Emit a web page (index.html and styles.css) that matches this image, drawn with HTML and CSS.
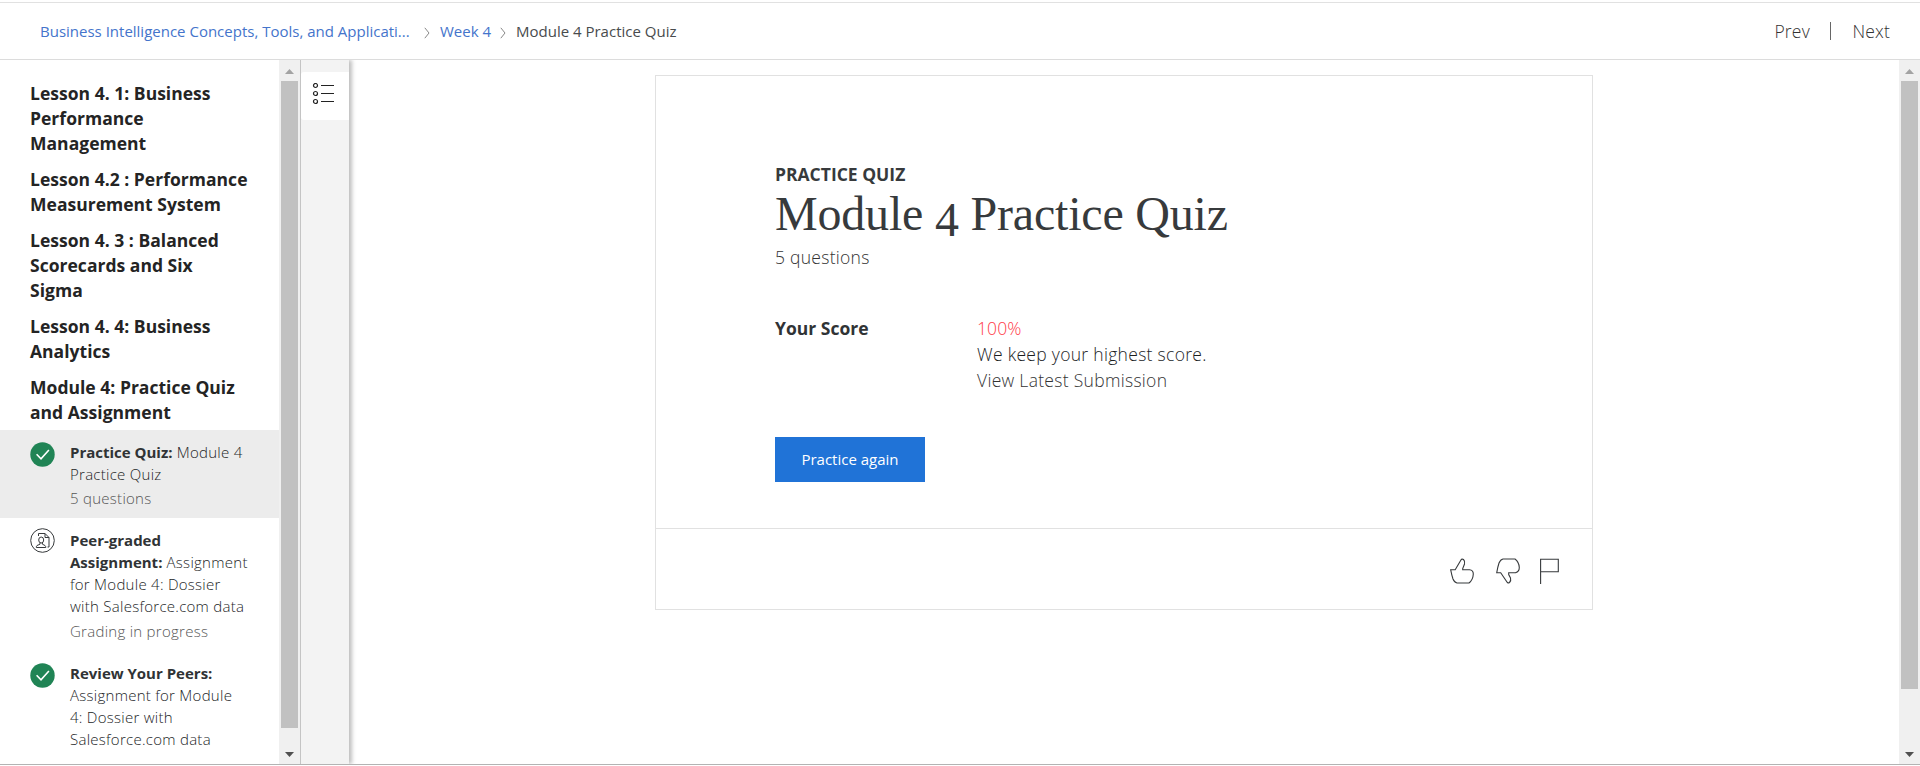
FILE: index.html
```html
<!DOCTYPE html>
<html lang="en">
<head>
<meta charset="utf-8">
<title>Module 4 Practice Quiz</title>
<link rel="stylesheet" href="styles.css">
</head>
<body>
<header class="topbar">
  <nav class="crumbs">
    <a class="crumb course">Business Intelligence Concepts, Tools, and Applicati...</a>
    <svg class="chev" width="6" height="12" viewBox="0 0 6 12"><path d="M.8.8 5 6 .8 11.2" fill="none" stroke="#888" stroke-width="1"/></svg>
    <a class="crumb week">Week 4</a>
    <svg class="chev" width="6" height="12" viewBox="0 0 6 12"><path d="M.8.8 5 6 .8 11.2" fill="none" stroke="#888" stroke-width="1"/></svg>
    <span class="crumb current">Module 4 Practice Quiz</span>
  </nav>
  <nav class="pager"><a class="prev">Prev</a><i class="bar"></i><a class="next">Next</a></nav>
</header>
<div class="body">
  <aside class="sidebar">
    <div class="lessons">
      <h3>Lesson 4. 1: Business<br>Performance<br>Management</h3>
      <h3>Lesson 4.2 : Performance<br>Measurement System</h3>
      <h3>Lesson 4. 3 : Balanced<br>Scorecards and Six<br>Sigma</h3>
      <h3>Lesson 4. 4: Business<br>Analytics</h3>
      <h3>Module 4: Practice Quiz<br>and Assignment</h3>
    </div>
    <div class="item active">
      <svg class="ico" width="25" height="25" viewBox="0 0 25 25"><circle cx="12.5" cy="12.5" r="12.2" fill="#208455"/><path d="M6.6 12.3 11 16.8 18.9 8" fill="none" stroke="#fff" stroke-width="1.6"/></svg>
      <div class="txt"><p><b>Practice Quiz:</b> Module 4<br>Practice Quiz</p><p class="sub">5 questions</p></div>
    </div>
    <div class="item peer">
      <svg class="ico" width="25" height="25" viewBox="0 0 25 25" fill="none" stroke="#373a3c" stroke-width="1"><circle cx="12.5" cy="12.5" r="11.8"/><path d="M8.5 8V5.5H15L19 9.500V19H17.500M15 5.500V9.500H19"/><ellipse cx="11.200" cy="12" rx="2.500" ry="3"/><path d="M10 14.800V16.200L7 17.500Q6.300 18 6.300 19.500H15.800Q15.800 18 15 17.500L12.400 16.200V14.800"/></svg>
      <div class="txt"><p><b>Peer-graded<br>Assignment:</b> Assignment<br>for Module 4: Dossier<br>with Salesforce.com data</p><p class="sub">Grading in progress</p></div>
    </div>
    <div class="item">
      <svg class="ico" width="25" height="25" viewBox="0 0 25 25"><circle cx="12.5" cy="12.5" r="12.2" fill="#208455"/><path d="M6.6 12.3 11 16.8 18.9 8" fill="none" stroke="#fff" stroke-width="1.6"/></svg>
      <div class="txt"><p><b>Review Your Peers:</b><br>Assignment for Module<br>4: Dossier with<br>Salesforce.com data</p></div>
    </div>
  </aside>
  <div class="scroll side-scroll">
    <svg width="9" height="5" viewBox="0 0 9 5"><path d="M4.500 0 9 5H0z" fill="#a3a3a3"/></svg>
    <div class="thumb"></div>
    <svg class="down" width="9" height="5" viewBox="0 0 9 5"><path d="M0 0H9L4.500 5z" fill="#505050"/></svg>
  </div>
  <div class="rail">
    <div class="tab"><svg width="23" height="22" viewBox="0 0 23 22" fill="none" stroke="#222" stroke-width="1.2"><circle cx="3.500" cy="2.500" r="2"/><circle cx="3.500" cy="10.500" r="2"/><circle cx="3.500" cy="18.500" r="2"/><path d="M9 2.500H22M9 10.500H22M9 18.500H22"/></svg></div>
  </div>
  <main class="main">
    <section class="card">
      <div class="content">
        <div class="kind">PRACTICE QUIZ</div>
        <h1>Module <span class="low">4</span> Practice Quiz</h1>
        <div class="count">5 questions</div>
        <div class="score">
          <b>Your Score</b>
          <div><div class="pct">100%</div><div class="keep">We keep your highest score.</div><div class="view">View Latest Submission</div></div>
        </div>
        <button class="again">Practice again</button>
      </div>
      <footer class="actions">
        <svg width="24" height="26" viewBox="0 0 24 26" fill="none" stroke="#373a3c" stroke-width="1.100"><path d="M.7 11.800H5.200L10.800 2.200Q11.800.4 13.500 1.500 15.300 3.300 14.500 6L12.700 10.500V11.800H19.500Q23.300 12.200 23.300 16 23 22 19 25H7Q4.500 24.500 3 21 1.700 17 .7 11.800Z"/></svg>
        <svg width="24" height="26" viewBox="0 0 24 26" fill="none" stroke="#373a3c" stroke-width="1.100"><path d="M.7 14.800H4.700L10.800 23.800Q11.800 25.600 13.500 24.500 15.300 22.700 14.500 20L12.700 16.500V14.800H19.500Q23.300 13.500 23.300 9.500 23 4 19 1H7Q4.500 1.500 3 5 1.700 9 .7 14.800Z"/></svg>
        <svg width="19" height="26" viewBox="0 0 19 26" fill="none" stroke="#373a3c" stroke-width="1.100"><path d="M.6 26V1.200H18.300V13.700H.6"/></svg>
      </footer>
    </section>
  </main>
  <div class="scroll main-scroll">
    <svg width="9" height="5" viewBox="0 0 9 5"><path d="M4.500 0 9 5H0z" fill="#a3a3a3"/></svg>
    <div class="thumb"></div>
    <svg class="down" width="9" height="5" viewBox="0 0 9 5"><path d="M0 0H9L4.500 5z" fill="#505050"/></svg>
  </div>
</div>
</body>
</html>
```
FILE: styles.css
```css
* { box-sizing: border-box; }
body { margin: 0; height: 766px; overflow: hidden; background: #fff; color: #1c1e1f; font-family: "Open Sans", "Liberation Sans", sans-serif; font-weight: 300; padding-top: 2px; }
h1, h3, p { margin: 0; }
svg { display: block; flex: none; }
.topbar { height: 58px; border-top: 1px solid #e1e1e1; border-bottom: 1px solid #dcdcdc; display: flex; justify-content: space-between; padding: 0 30px 0 40px; }
.crumbs { display: flex; align-items: center; font-size: 15px; line-height: 22px; white-space: nowrap; font-weight: 400; }
.crumb { color: #4474cb; }
.course { width: 370px; }
.chev { margin-top: 3px; margin-left: 14px; }
.week { margin-left: 10px; width: 51px; }
.week + .chev { margin-left: 9px; }
.current { margin-left: 10px; color: #484b4d; }
.pager { display: flex; align-items: center; font-size: 17.500px; color: #333; letter-spacing: .2px; }
.prev { width: 56px; }
.bar { width: 1px; height: 18px; background: #666; margin-right: 21px; }
.body { height: 705px; display: flex; border-bottom: 1px solid #b3b3b3; }
.sidebar { width: 279px; overflow: hidden; }
.lessons { height: 370px; padding: 21px 0 0 30px; display: flex; flex-direction: column; gap: 11px; }
.lessons h3 { font-size: 17.500px; line-height: 25px; font-weight: 700; letter-spacing: .02px; color: #242424; white-space: nowrap; }
.item { display: flex; padding: 11px 0 9px 30px; gap: 15px; font-size: 15px; line-height: 22px; letter-spacing: .27px; white-space: nowrap; }
.item b { font-weight: 700; letter-spacing: 0; color: #303335; }
.item .ico { margin-top: 1px; }
.active { height: 88px; background: #ececec; }
.peer { height: 133px; }
.peer .ico { margin-top: -1px; }
.sub { color: #555; margin-top: 2px; }
.peer .sub { margin-top: 3px; }
.scroll { width: 21px; background: #f0f0f0; display: flex; flex-direction: column; align-items: center; padding: 9px 0 7px; flex: none; }
.thumb { width: 17px; background: #c1c1c1; margin-top: 7px; }
.side-scroll .thumb { height: 647px; }
.main-scroll .thumb { height: 608px; }
.down { margin-top: auto; }
.rail { width: 49px; background: #f3f3f3; border-left: 1px solid #c4c4c4; box-shadow: 3px 0 4px rgba(0,0,0,.25); padding-top: 12px; clip-path: inset(0 -10px 0 0); }
.tab { height: 48px; background: #fff; border-radius: 3px 0 0 3px; padding: 11px 0 0 11px; }
.main { flex: 1; padding: 15px 306px 0 306px; }
.card { height: 535px; border: 1px solid #e1e1e1; }
.content { height: 453px; border-bottom: 1px solid #e1e1e1; padding: 85px 0 0 119px; white-space: nowrap; }
.kind { font-size: 17.500px; line-height: 26px; font-weight: 700; color: #373a3c; }
h1 { font-family: "Liberation Serif", serif; font-size: 48px; line-height: 52px; font-weight: 400; margin-top: 1px; letter-spacing: -.2px; color: #373a3c; }
.low { display: inline-block; line-height: 1; transform: translateY(6px); }
.count { font-size: 17.500px; line-height: 26px; color: #333; margin-top: 4px; letter-spacing: .27px; }
.score { display: grid; grid-template-columns: 202px 1fr; margin-top: 45px; font-size: 17.500px; line-height: 26px; letter-spacing: .3px; }
.score b { font-weight: 700; letter-spacing: 0; color: #303335; }
.pct { color: #ff3a48; letter-spacing: .1px; }
.view { color: #333; }
.again { display: block; margin-top: 44px; width: 150px; height: 45px; border: 0; padding: 0 0 1px; background: #2073d7; color: #fff; font: 400 15px "Open Sans", sans-serif; }
.actions { display: flex; justify-content: flex-end; padding: 29px 33px 0 0; }
.actions svg { margin-left: 22px; }
.actions svg:last-child { margin-left: 20px; }
```
